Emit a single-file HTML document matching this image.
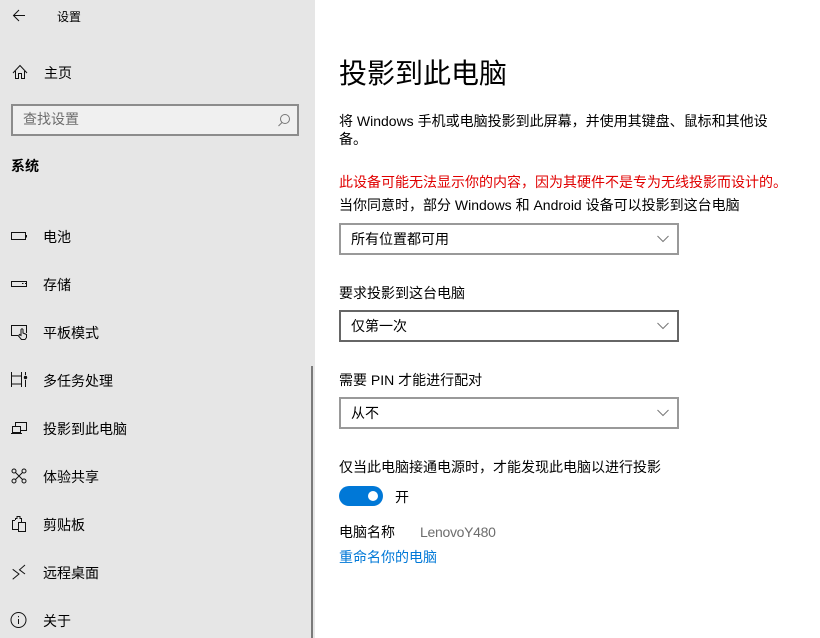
<!DOCTYPE html>
<html lang="zh-CN"><head><meta charset="utf-8"><title>设置</title>
<style>
html,body{margin:0;padding:0;width:820px;height:638px;overflow:hidden;background:#fff}
body{font-family:"Liberation Sans","Noto Sans CJK SC",sans-serif;font-size:14px;color:#000;position:relative}
.t{position:absolute;white-space:nowrap;line-height:20px;height:20px}
#side{position:absolute;left:0;top:0;width:315px;height:638px;background:#e6e6e6}
.sel{position:absolute;left:339px;width:336px;height:28px;border:2px solid #999;background:#fff}
.sel.d{border-color:#666}
.sel span{position:absolute;left:10px;top:4px;line-height:20px}
#ov{position:absolute;left:0;top:0;width:820px;height:638px;fill:none;stroke:#111;stroke-width:1}
</style></head><body>
<div id="side">
<div class="t" style="left:57px;top:7px;font-size:12px">设置</div>
<div class="t" style="left:44px;top:63px">主页</div>
<div style="position:absolute;left:11px;top:104px;width:284px;height:28px;border:2px solid #8c8c8c;background:#f0f0f0"></div>
<div class="t" style="left:23px;top:109px;color:#6d6d6d">查找设置</div>
<div class="t" style="left:11px;top:156px;font-weight:bold">系统</div>
<div class="t" style="left:43px;top:227px">电池</div>
<div class="t" style="left:43px;top:275px">存储</div>
<div class="t" style="left:43px;top:323px">平板模式</div>
<div class="t" style="left:43px;top:371px">多任务处理</div>
<div class="t" style="left:43px;top:419px">投影到此电脑</div>
<div class="t" style="left:43px;top:467px">体验共享</div>
<div class="t" style="left:43px;top:515px">剪贴板</div>
<div class="t" style="left:43px;top:563px">远程桌面</div>
<div class="t" style="left:43px;top:611px">关于</div>
<div style="position:absolute;left:311px;top:366px;width:2px;height:272px;background:#7a7a7a"></div>
</div>

<div class="t" style="left:339px;top:54px;font-size:28px;line-height:40px;height:40px">投影到此电脑</div>
<div class="t" style="left:339px;top:111px">将 Windows 手机或电脑投影到此屏幕，并使用其键盘、鼠标和其他设</div>
<div class="t" style="left:339px;top:129px">备。</div>
<div class="t" style="left:339px;top:172px;color:#e00000">此设备可能无法显示你的内容，因为其硬件不是专为无线投影而设计的。</div>
<div class="t" style="left:339px;top:195px">当你同意时，部分 Windows 和 Android 设备可以投影到这台电脑</div>
<div class="sel" style="top:223px"><span>所有位置都可用</span></div>
<div class="t" style="left:339px;top:283px">要求投影到这台电脑</div>
<div class="sel d" style="top:310px"><span>仅第一次</span></div>
<div class="t" style="left:339px;top:370px">需要 PIN 才能进行配对</div>
<div class="sel" style="top:397px"><span>从不</span></div>
<div class="t" style="left:339px;top:457px">仅当此电脑接通电源时，才能发现此电脑以进行投影</div>
<div style="position:absolute;left:339px;top:486px;width:44px;height:20px;border-radius:10px;background:#0078d7"></div>
<div style="position:absolute;left:368px;top:491px;width:10px;height:10px;border-radius:5px;background:#fff"></div>
<div class="t" style="left:395px;top:487px">开</div>
<div class="t" style="left:339px;top:522px">电脑名称</div>
<div class="t" style="left:420px;top:522px;color:#6d6d6d;letter-spacing:-.3px">LenovoY480</div>
<div class="t" style="left:339px;top:547px;color:#0078d7">重命名你的电脑</div>

<svg id="ov" viewBox="0 0 820 638">
<path d="M13.5 15.500H25M19 10L13.500 15.500 19 21"/>
<path d="M13 73L20 65.500 27 73M15.500 71V78.500H18.500V73.500H21.500V78.500H24.500V71"/>
<g stroke="#777"><circle cx="285" cy="119" r="4.500"/><path d="M282 122.500L278.500 126"/></g>
<path d="M11.500 232.500H25.500V239.500H11.500Z"/><path d="M26.500 235V237.500"/>
<path d="M11.500 281.500H26.500V286.500H11.500Z"/><path d="M22 283.500H23.500M25 283.500H26"/>
<path d="M18 335.500H11.500V325.500H26.500V333"/>
<path d="M21.500 339.500L18.500 336 19.500 334.500 21 335.500V329.500Q22 328 23 329.500V333L26.500 334.500V337.500L25 339.500Z"/>
<path d="M11.500 372V387M21.500 372V387M11.500 376H21.500M11.500 384H21.500M25.500 372V375M25.500 380V387"/>
<circle cx="25.500" cy="377.500" r="1.200" fill="#111"/>
<path d="M15.500 426V422.500H26.500V430.500H21"/><path d="M12.500 426.500H20.500V432.500H12.500Z"/><path d="M11 433.500H22"/>
<circle cx="14" cy="471" r="2"/><circle cx="24" cy="471" r="2"/><circle cx="14" cy="481" r="2"/><circle cx="24" cy="481" r="2"/>
<path d="M15.500 472.500L22.500 479.500M22.500 472.500L15.500 479.500"/>
<path d="M15 520.500H12.500V529.500H18"/><path d="M15.500 520V518.500H17V516.500H20V518.500H21.500V522"/><path d="M18.500 522.500H25.500V531.500H18.500Z"/>
<path d="M12.700 569.300L19 574 12.700 579.300M25 565L19.500 569.800 25 574"/>
<circle cx="18.500" cy="620" r="7.500"/><path d="M18.500 619V624M18.500 616V617.200"/>
<g stroke="#777"><path d="M657.500 236L663 241.500 668.500 236"/><path d="M657.500 323L663 328.500 668.500 323"/><path d="M657.500 410L663 415.500 668.500 410"/></g>
</svg>
</body></html>
